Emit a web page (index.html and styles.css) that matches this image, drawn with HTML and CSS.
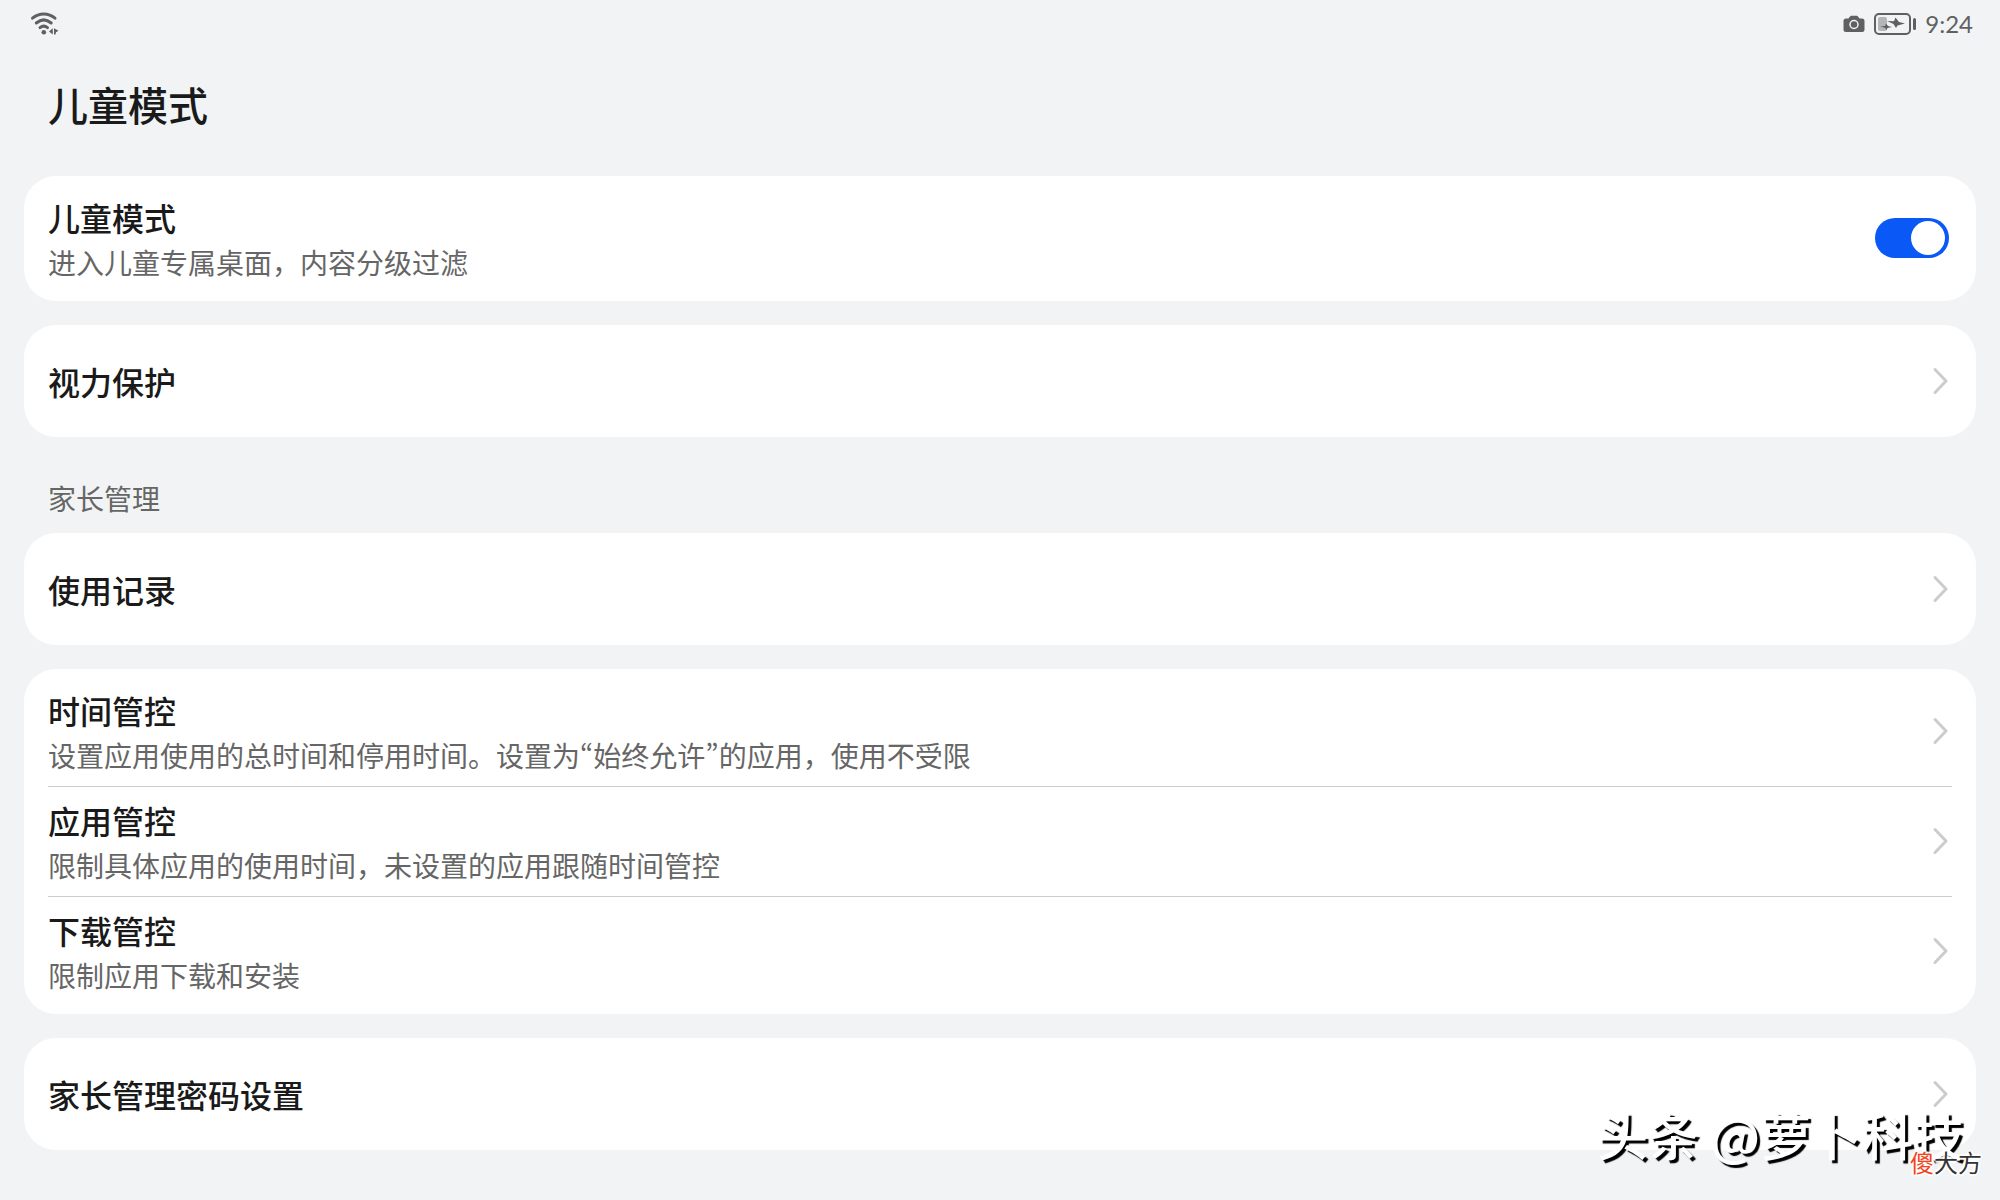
FILE: index.html
```html
<!DOCTYPE html>
<html lang="zh-CN">
<head>
<meta charset="utf-8">
<meta name="viewport" content="width=device-width, initial-scale=1">
<title>儿童模式</title>
<link rel="stylesheet" href="styles.css">
</head>
<body>

<svg style="display: none;">
  <symbol id="arrow" viewBox="0 0 24 32">
    <path d="M7 4.500 L18 16 L7 27.500"></path>
  </symbol>
</svg>

<div class="status-bar">
  <svg class="wifi" viewBox="0 0 30 26" width="30" height="26">
    <g fill="none" stroke="#5f6062" stroke-width="3" stroke-linecap="round">
      <path d="M2.500 7.200C9 1.600 18.500 1.600 25 7.200"></path>
      <path d="M6.300 12C11 8 16.500 8 21.200 12"></path>
      <path d="M10 16.600C12.500 14.600 15 14.600 17.500 16.600"></path>
    </g>
    <g fill="#5f6062">
      <circle cx="13.800" cy="21.200" r="2.300"></circle>
      <path d="M19 20.500l3.800-3.200v6.200zM24 17.300l4.500 2.500-2.500 1.500-.5 2.200H24z"></path>
    </g>
  </svg>
  <div class="status-right">
    <svg viewBox="0 0 22 18" width="22" height="18">
      <path fill="#5f6062" d="M6.500 2L8 .8h6L15.500 2l1 1.500H19A2.500 2.500 0 0 1 21.500 6v8.500A2.500 2.500 0 0 1 19 17H3A2.500 2.500 0 0 1 .5 14.500V6A2.500 2.500 0 0 1 3 3.500h2.500z"></path>
      <circle cx="11" cy="9.500" r="4" fill="none" stroke="#f1f3f5" stroke-width="1.500"></circle>
    </svg>
    <svg viewBox="0 0 42 22" width="42" height="22">
      <rect x="1" y="1" width="35" height="20" rx="4" fill="none" stroke="#5f6062" stroke-width="2"></rect>
      <rect x="4" y="4" width="9" height="14" rx="2" fill="#b5b6b8"></rect>
      <rect x="39" y="5" width="3" height="12" rx="1.500" fill="#5f6062"></rect>
      <path fill="#5f6062" d="M13 8L20 8.300l1.500-3.800 3.500 4.500 6 1.500-7.500 2-1.500 2.500-2.500-4zM6 13.500l5-.5 1-2.500 2 2.500 4 1-4.500 1-1 2-1.500-2.300z"></path>
    </svg>
    <span class="clock">9:24</span>
  </div>
</div>

<h1 class="page-title">儿童模式</h1>

<main class="content">
  <div class="card">
    <label class="row">
      <span class="text">
        <span class="name">儿童模式</span>
        <span class="desc">进入儿童专属桌面，内容分级过滤</span>
      </span>
      <input class="switch" type="checkbox" checked>
    </label>
  </div>

  <div class="card">
    <a class="row single" href="#">
      <span class="name">视力保护</span>
      <svg class="arrow"><use href="#arrow"></use></svg>
    </a>
  </div>

  <h2 class="section-title">家长管理</h2>

  <div class="card">
    <a class="row single" href="#">
      <span class="name">使用记录</span>
      <svg class="arrow"><use href="#arrow"></use></svg>
    </a>
  </div>

  <div class="card">
    <a class="row" href="#">
      <span class="text">
        <span class="name">时间管控</span>
        <span class="desc">设置应用使用的总时间和停用时间。设置为<span class="quoted">“始终允许”</span>的应用，使用不受限</span>
      </span>
      <svg class="arrow"><use href="#arrow"></use></svg>
    </a>
    <a class="row" href="#">
      <span class="text">
        <span class="name">应用管控</span>
        <span class="desc">限制具体应用的使用时间，未设置的应用跟随时间管控</span>
      </span>
      <svg class="arrow"><use href="#arrow"></use></svg>
    </a>
    <a class="row" href="#">
      <span class="text">
        <span class="name">下载管控</span>
        <span class="desc">限制应用下载和安装</span>
      </span>
      <svg class="arrow"><use href="#arrow"></use></svg>
    </a>
  </div>

  <div class="card">
    <a class="row single" href="#">
      <span class="name">家长管理密码设置</span>
      <svg class="arrow"><use href="#arrow"></use></svg>
    </a>
  </div>
</main>

<div class="watermark">头条 @萝卜科技</div>
<div class="site-mark"><span>傻</span>大方</div>

</body>
</html>
```

FILE: styles.css
```css
*, *:before, *:after {
  box-sizing: border-box;
}

body {
  position: relative;
  min-height: 100vh;
  margin: 0;
  background: #f1f3f5;
  color: #1a1a1a;
  font-family: "Noto Sans CJK SC", sans-serif;
}

/* status bar */
.status-bar {
  display: flex;
  justify-content: space-between;
  align-items: center;
  height: 48px;
  padding: 0 27px 0 30px;
}
.status-right {
  display: flex;
  align-items: center;
  gap: 9px;
}
.clock {
  color: #5f6062;
  font: 24px/28px Lato, sans-serif;
}

.page-title {
  margin: 0;
  padding: 28px 48px 44px;
  font-size: 40px;
  font-weight: 500;
  line-height: 56px;
}

/* cards */
.content {
  display: flex;
  flex-direction: column;
  gap: 24px;
  padding: 0 24px;
}
.card {
  padding: 8px 24px;
  border-radius: 32px;
  background: #fff;
}
.row {
  display: flex;
  justify-content: space-between;
  align-items: center;
  padding: 9px 0 10px;
  color: inherit;
  text-decoration: none;
}
.row + .row {
  border-top: 1px solid #ccc;
}
.single {
  padding: 24px 0;
}
.text {
  display: flex;
  flex-direction: column;
}
.name {
  font-size: 32px;
  font-weight: 500;
  line-height: 48px;
}
.desc {
  color: #666;
  font-size: 28px;
  line-height: 42px;
}
/* narrow quote marks */
.quoted {
  font-feature-settings: "pwid";
}
.section-title {
  margin: 0 0 -10px;
  padding: 16px 24px 0;
  color: #666;
  font-size: 28px;
  font-weight: 400;
  line-height: 42px;
}

.arrow {
  flex: none;
  width: 24px;
  height: 32px;
  fill: none;
  stroke: #ccc;
  stroke-width: 3;
  stroke-linecap: round;
  stroke-linejoin: round;
}

.switch {
  flex: none;
  appearance: none;
  display: flex;
  align-items: center;
  width: 74px;
  height: 40px;
  margin: 0 3px 0 0;
  padding: 0 4px;
  border-radius: 20px;
  background: #ccc;
}
.switch:before {
  content: "";
  width: 34px;
  height: 34px;
  border-radius: 50%;
  background: #fff;
}
.switch:checked {
  justify-content: flex-end;
  background: #0a59f7;
}

/* marks over the page corner */
.watermark {
  position: absolute;
  right: 36px;
  bottom: 30px;
  color: #fff;
  font-size: 51px;
  font-weight: 500;
  line-height: 72px;
  text-shadow: 3px 3px 1px #000;
}
.site-mark {
  position: absolute;
  right: 18px;
  bottom: 20px;
  color: #333;
  font-size: 24px;
  line-height: 36px;
  text-shadow: 0 0 3px #fff, 2px 0 1px #fff, -2px 0 1px #fff, 0 2px 1px #fff, 0 -2px 1px #fff;
}
.site-mark span {
  color: #f4421c;
}
```
